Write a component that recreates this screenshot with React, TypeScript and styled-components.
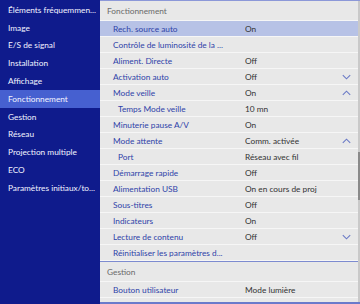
import React from "react";
import styled, { createGlobalStyle } from "styled-components";

const Global = createGlobalStyle`
  html, body { margin: 0; padding: 0; background: #0f1b8c; }
  * { box-sizing: border-box; }
  body { font-family: Lato, "Open Sans", sans-serif; }
`;

const Screen = styled.div`
  width: 360px;
  height: 304px;
  display: flex;
  overflow: hidden;
  background: #0f1b8c;
`;

const Sidebar = styled.nav`
  width: 100px;
  flex: none;
  background: #0f1b8c;
  display: flex;
  flex-direction: column;
  padding-top: 1px;
`;

const NavItem = styled.div<{ $active?: boolean }>`
  height: 17.8px;
  display: flex;
  align-items: center;
  padding-left: 8px;
  font-size: 8.3px;
  color: #f2f4ff;
  white-space: nowrap;
  overflow: hidden;
  background: ${(p) => (p.$active ? "#4660d0" : "transparent")};
`;

const Panel = styled.section`
  flex: 1;
  position: relative;
  background: #e8e8e8;
  border-top: 1px solid #8c98d8;
  border-bottom: 2px solid #6a7acb;
  display: flex;
  flex-direction: column;
  overflow: hidden;
`;

const SectionHeader = styled.div`
  height: 20px;
  flex: none;
  display: flex;
  align-items: center;
  padding-left: 7px;
  font-size: 8.3px;
  color: #6a6a6a;
  border-bottom: 1px solid #f6f6f6;
`;

const Divider = styled.div`
  height: 1px;
  flex: none;
  background: #7d8bd0;
`;

const Row = styled.div<{ $selected?: boolean }>`
  height: 16px;
  flex: none;
  display: grid;
  grid-template-columns: 145px 1fr 18px;
  align-items: center;
  background: ${(p) => (p.$selected ? "#b7c2e6" : "#e8e8e8")};
  border-bottom: 1px solid #f6f6f6;
  font-size: 8.3px;
`;

const Label = styled.span<{ $indent?: boolean }>`
  padding-left: ${(p) => (p.$indent ? "18px" : "13px")};
  color: #2f43a8;
  white-space: nowrap;
  overflow: hidden;
`;

const Value = styled.span`
  color: #333;
  white-space: nowrap;
  overflow: hidden;
`;

const Chevron = styled.svg`
  width: 9px;
  height: 6px;
  justify-self: start;
`;

const ScrollTrack = styled.div`
  position: absolute;
  right: 0;
  top: 0;
  bottom: 0;
  width: 2px;
  background: #c9c9c9;
`;

const ScrollThumb = styled.div`
  position: absolute;
  left: 0;
  top: 151px;
  height: 48px;
  width: 2px;
  background: #8a8a8a;
`;

const Arrow = ({ dir }: { dir: "up" | "down" }) => (
  <Chevron viewBox="0 0 9 6">
    <path
      d={dir === "down" ? "M0.8 1.2 L4.5 4.8 L8.2 1.2" : "M0.8 4.8 L4.5 1.2 L8.2 4.8"}
      fill="none"
      stroke="#6a7ac6"
      strokeWidth="1.1"
    />
  </Chevron>
);

const nav = [
  "Éléments fréquemmen...",
  "Image",
  "E/S de signal",
  "Installation",
  "Affichage",
  "Fonctionnement",
  "Gestion",
  "Réseau",
  "Projection multiple",
  "ECO",
  "Paramètres initiaux/to...",
];

type Item = { label: string; value?: string; indent?: boolean; arrow?: "up" | "down"; selected?: boolean };

const rows: Item[] = [
  { label: "Rech. source auto", value: "On", selected: true },
  { label: "Contrôle de luminosité de la ..." },
  { label: "Aliment. Directe", value: "Off" },
  { label: "Activation auto", value: "Off", arrow: "down" },
  { label: "Mode veille", value: "On", arrow: "up" },
  { label: "Temps Mode veille", value: "10 mn", indent: true },
  { label: "Minuterie pause A/V", value: "On" },
  { label: "Mode attente", value: "Comm. activée", arrow: "up" },
  { label: "Port", value: "Réseau avec fil", indent: true },
  { label: "Démarrage rapide", value: "Off" },
  { label: "Alimentation USB", value: "On en cours de proj" },
  { label: "Sous-titres", value: "Off" },
  { label: "Indicateurs", value: "On" },
  { label: "Lecture de contenu", value: "Off", arrow: "down" },
  { label: "Réinitialiser les paramètres d..." },
];

const gestion: Item[] = [
  { label: "Bouton utilisateur", value: "Mode lumière" },
  { label: "Langue utilisateur", value: "" },
];

const renderRow = (r: Item, i: number) => (
  <Row key={i} $selected={r.selected}>
    <Label $indent={r.indent}>{r.label}</Label>
    <Value>{r.value ?? ""}</Value>
    {r.arrow ? <Arrow dir={r.arrow} /> : <span />}
  </Row>
);

export default function App() {
  return (
    <>
      <Global />
      <Screen>
        <Sidebar>
          {nav.map((n) => (
            <NavItem key={n} $active={n === "Fonctionnement"}>
              {n}
            </NavItem>
          ))}
        </Sidebar>
        <Panel>
          <SectionHeader>Fonctionnement</SectionHeader>
          {rows.map(renderRow)}
          <Divider />
          <SectionHeader>Gestion</SectionHeader>
          {gestion.map(renderRow)}
          <ScrollTrack>
            <ScrollThumb />
          </ScrollTrack>
        </Panel>
      </Screen>
    </>
  );
}
